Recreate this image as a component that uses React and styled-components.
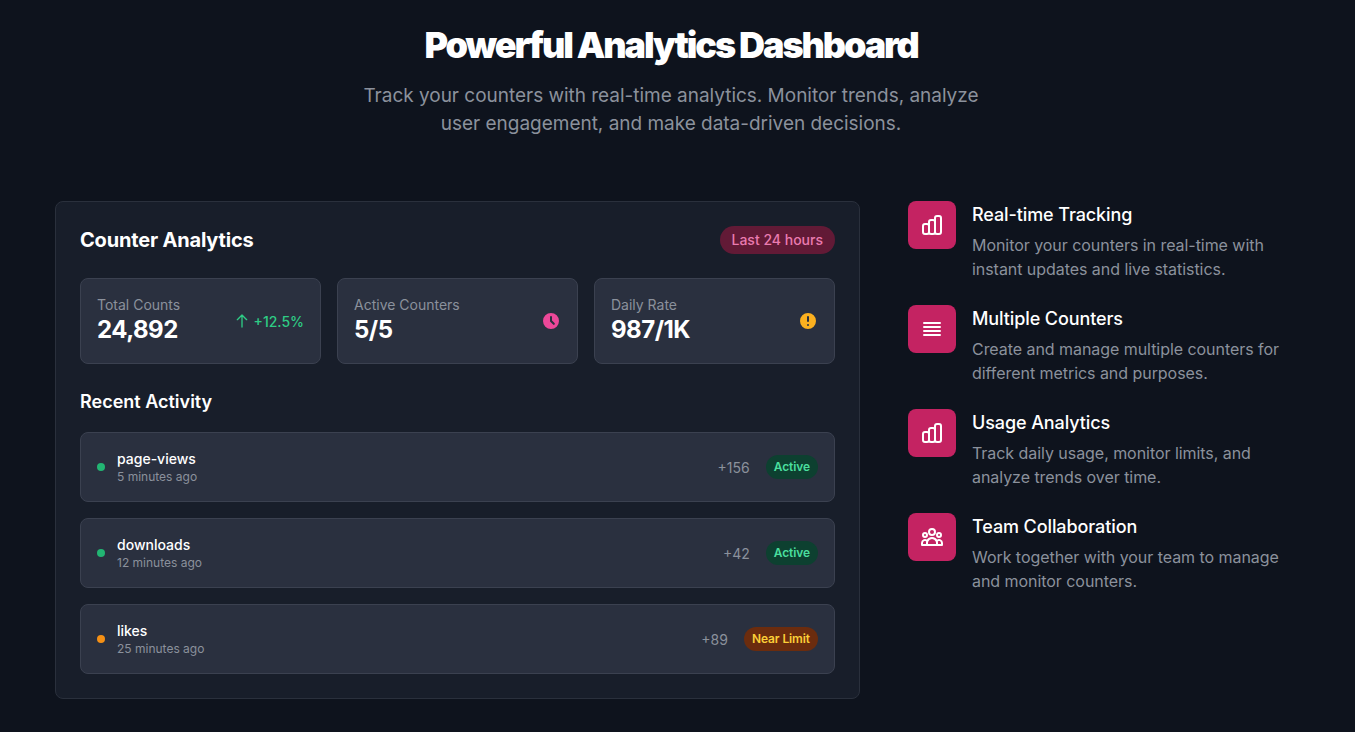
import React from 'react';
import styled, { createGlobalStyle } from 'styled-components';
import {
  HiOutlineChartBar,
  HiOutlineUserGroup,
  HiOutlineArrowUp,
  HiClock,
  HiExclamationCircle,
} from 'react-icons/hi';

const GlobalStyle = createGlobalStyle`
  html, body {
    margin: 0;
    padding: 0;
    background: #0e131d;
  }
  * {
    box-sizing: border-box;
  }
  body {
    font-family: Inter, "Liberation Sans", sans-serif;
    color: #ffffff;
    -webkit-font-smoothing: antialiased;
  }
`;

const Page = styled.div`
  width: 1355px;
  height: 732px;
  overflow: hidden;
  padding: 20px 68px 0 55px;
  background: #0e131d;
`;

const Hero = styled.header`
  display: flex;
  flex-direction: column;
  align-items: center;
  margin-bottom: 63px;
`;

const Title = styled.h1`
  margin: 0 0 12px;
  font-size: 36px;
  line-height: 50px;
  font-weight: 900;
  letter-spacing: -2.1px;
  color: #ffffff;
`;

const Subtitle = styled.p`
  margin: 0;
  width: 640px;
  font-size: 19px;
  line-height: 28px;
  font-weight: 400;
  letter-spacing: -0.02px;
  text-align: center;
  color: #8b919c;
`;

const Columns = styled.div`
  display: grid;
  grid-template-columns: 805px 1fr;
  gap: 48px;
  align-items: start;
`;

const Panel = styled.section`
  height: 498px;
  padding: 24px;
  background: #181e2a;
  border: 1px solid #2a303c;
  border-radius: 8px;
`;

const PanelHead = styled.div`
  display: flex;
  align-items: center;
  justify-content: space-between;
  height: 28px;
  margin-bottom: 24px;
`;

const PanelTitle = styled.h2`
  margin: 0;
  font-size: 20px;
  line-height: 28px;
  font-weight: 700;
  letter-spacing: -0.18px;
`;

const RangeBadge = styled.span`
  padding: 0 12px 1px;
  height: 28px;
  display: inline-flex;
  align-items: center;
  font-size: 14px;
  font-weight: 500;
  border-radius: 999px;
  color: #ea7bb0;
  background: #621a36;
`;

const Stats = styled.div`
  display: grid;
  grid-template-columns: repeat(3, 1fr);
  gap: 16px;
  margin-bottom: 24px;
`;

const StatCard = styled.div`
  display: flex;
  align-items: center;
  justify-content: space-between;
  height: 86px;
  padding: 0 16px;
  background: #2a303f;
  border: 1px solid #3b4150;
  border-radius: 8px;
`;

const StatLabel = styled.div`
  font-size: 14px;
  line-height: 20px;
  font-weight: 400;
  color: #8b919c;
`;

const StatValue = styled.div`
  margin-bottom: 2px;
  font-size: 24px;
  line-height: 30px;
  font-weight: 700;
  letter-spacing: -0.5px;
  color: #ffffff;
`;

const Trend = styled.div`
  display: flex;
  align-items: center;
  gap: 4px;
  font-size: 14px;
  font-weight: 500;
  color: #2ecc85;
  svg {
    width: 16px;
    height: 16px;
  }
`;

const StatIcon = styled.span`
  display: flex;
  color: ${(p) => p.$color};
  svg {
    width: 20px;
    height: 20px;
  }
`;

const SectionTitle = styled.h3`
  margin: 0 0 16px;
  font-size: 18px;
  line-height: 28px;
  font-weight: 600;
`;

const ActivityList = styled.div`
  display: flex;
  flex-direction: column;
  gap: 16px;
`;

const ActivityRow = styled.div`
  display: flex;
  align-items: center;
  height: 70px;
  padding: 0 16px;
  background: #2a303f;
  border: 1px solid #3b4150;
  border-radius: 8px;
`;

const Dot = styled.span`
  width: 8px;
  height: 8px;
  margin-right: 12px;
  border-radius: 50%;
  background: ${(p) => p.$color};
`;

const ActivityText = styled.div`
  flex: 1;
`;

const ActivityName = styled.div`
  margin-bottom: 1px;
  font-size: 14px;
  line-height: 18px;
  font-weight: 500;
  color: #ffffff;
`;

const ActivityTime = styled.div`
  font-size: 12px;
  line-height: 16px;
  color: #8b919c;
`;

const Delta = styled.span`
  margin-right: 16px;
  font-size: 14px;
  color: #8b919c;
`;

const StatusBadge = styled.span`
  height: 24px;
  padding: 0 8px 1px;
  display: inline-flex;
  align-items: center;
  font-size: 12px;
  font-weight: 600;
  letter-spacing: -0.1px;
  border-radius: 999px;
  color: ${(p) => (p.$warn ? '#fbcf38' : '#4ade9e')};
  background: ${(p) => (p.$warn ? '#6b2c0e' : '#0d4030')};
`;

const Features = styled.div`
  display: flex;
  flex-direction: column;
  gap: 32px;
`;

const Feature = styled.div`
  display: flex;
  gap: 16px;
  height: 72px;
`;

const FeatureIcon = styled.div`
  flex: none;
  display: flex;
  align-items: center;
  justify-content: center;
  width: 48px;
  height: 48px;
  border-radius: 8px;
  color: #ffffff;
  background: #c42362;
  svg {
    width: 24px;
    height: 24px;
  }
`;

const FeatureTitle = styled.h4`
  margin: 0 0 4px;
  font-size: 18px;
  line-height: 28px;
  font-weight: 500;
  letter-spacing: -0.1px;
`;

const FeatureText = styled.p`
  margin: 0;
  font-size: 16px;
  line-height: 24px;
  letter-spacing: -0.05px;
  white-space: nowrap;
  color: #8b919c;
`;

const LinesIcon = () => (
  <svg viewBox="0 0 24 24" fill="none" stroke="currentColor" strokeWidth="2" strokeLinecap="round">
    <path d="M4 6h16M4 10h16M4 14h16M4 18h16" />
  </svg>
);

const stats = [
  { label: 'Total Counts', value: '24,892', trend: '+12.5%' },
  { label: 'Active Counters', value: '5/5', icon: <HiClock />, color: '#ec4899' },
  { label: 'Daily Rate', value: '987/1K', icon: <HiExclamationCircle />, color: '#fbb01f' },
];

const activity = [
  { name: 'page-views', time: '5 minutes ago', delta: '+156', status: 'Active', dot: '#22b573' },
  { name: 'downloads', time: '12 minutes ago', delta: '+42', status: 'Active', dot: '#22b573' },
  { name: 'likes', time: '25 minutes ago', delta: '+89', status: 'Near Limit', dot: '#f59015', warn: true },
];

const features = [
  {
    icon: <HiOutlineChartBar />,
    title: 'Real-time Tracking',
    lines: ['Monitor your counters in real-time with', 'instant updates and live statistics.'],
  },
  {
    icon: <LinesIcon />,
    title: 'Multiple Counters',
    lines: ['Create and manage multiple counters for', 'different metrics and purposes.'],
  },
  {
    icon: <HiOutlineChartBar />,
    title: 'Usage Analytics',
    lines: ['Track daily usage, monitor limits, and', 'analyze trends over time.'],
  },
  {
    icon: <HiOutlineUserGroup />,
    title: 'Team Collaboration',
    lines: ['Work together with your team to manage', 'and monitor counters.'],
  },
];

const App = () => {
  return (
    <Page>
      <GlobalStyle />
      <Hero>
        <Title>Powerful Analytics Dashboard</Title>
        <Subtitle>
          Track your counters with real-time analytics. Monitor trends, analyze user engagement, and make data-driven
          decisions.
        </Subtitle>
      </Hero>

      <Columns>
        <Panel>
          <PanelHead>
            <PanelTitle>Counter Analytics</PanelTitle>
            <RangeBadge>Last 24 hours</RangeBadge>
          </PanelHead>

          <Stats>
            {stats.map((s) => (
              <StatCard key={s.label}>
                <div>
                  <StatLabel>{s.label}</StatLabel>
                  <StatValue>{s.value}</StatValue>
                </div>
                {s.trend ? (
                  <Trend>
                    <HiOutlineArrowUp />
                    {s.trend}
                  </Trend>
                ) : (
                  <StatIcon $color={s.color}>{s.icon}</StatIcon>
                )}
              </StatCard>
            ))}
          </Stats>

          <SectionTitle>Recent Activity</SectionTitle>
          <ActivityList>
            {activity.map((a) => (
              <ActivityRow key={a.name}>
                <Dot $color={a.dot} />
                <ActivityText>
                  <ActivityName>{a.name}</ActivityName>
                  <ActivityTime>{a.time}</ActivityTime>
                </ActivityText>
                <Delta>{a.delta}</Delta>
                <StatusBadge $warn={a.warn}>{a.status}</StatusBadge>
              </ActivityRow>
            ))}
          </ActivityList>
        </Panel>

        <Features>
          {features.map((f) => (
            <Feature key={f.title}>
              <FeatureIcon>{f.icon}</FeatureIcon>
              <div>
                <FeatureTitle>{f.title}</FeatureTitle>
                <FeatureText>
                  {f.lines[0]}
                  <br />
                  {f.lines[1]}
                </FeatureText>
              </div>
            </Feature>
          ))}
        </Features>
      </Columns>
    </Page>
  );
};

export default App;
